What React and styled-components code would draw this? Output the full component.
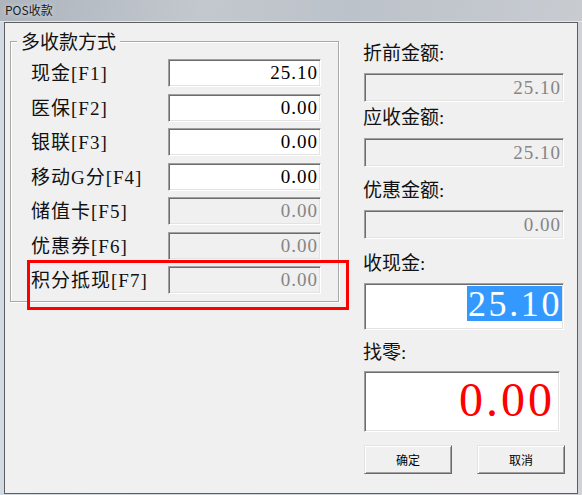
import React from "react";
import styled, { createGlobalStyle } from "styled-components";

const GlobalStyle = createGlobalStyle`
  html, body { margin: 0; padding: 0; }
  body { width: 582px; height: 495px; overflow: hidden; background: #cfd6df; }
  * { box-sizing: border-box; }
`;

const CJK = `"Noto Sans CJK SC", sans-serif`;
const SERIF = `"Liberation Serif", "Noto Sans CJK SC", serif`;

const Window = styled.div`
  width: 582px;
  height: 495px;
  display: flex;
  flex-direction: column;
  background: linear-gradient(90deg, #d2dae4 0%, #cdd3db 50%, #cfd2d7 100%);
`;

const TitleBar = styled.div`
  height: 22px;
  flex: none;
  padding-left: 5px;
  font-family: ${CJK};
  font-size: 12px;
  line-height: 20px;
  color: #1b1b1b;
  text-shadow: 0 0 5px rgba(255, 255, 255, 0.7);
  background: linear-gradient(100deg, #adb4bc 0%, #c3c8ce 35%, #bcc2c9 60%, #c8ccd1 100%);
  border-bottom: 1px solid #e4e7ea;
`;

const Client = styled.div`
  position: relative;
  flex: 1;
  margin: 0 4px 1px 4px;
  border: 1px solid #5e5e5e;
  background: #f0f0f0;
  display: flex;
  align-items: flex-start;
`;

const GroupBox = styled.fieldset`
  margin: 8px 0 0 5px;
  width: 329px;
  padding: 8px 17px 7px 6px;
  border: 1px solid #a9a9a9;
  box-shadow: 1px 1px 0 #ffffff, inset 1px 1px 0 #ffffff;
  min-inline-size: 0;
`;

const GroupTitle = styled.legend`
  padding: 0 4px;
  height: 20px;
  font-family: ${CJK};
  font-size: 19px;
  line-height: 20px;
  color: #111;
  background: #f0f0f0;
`;

const Rows = styled.div`
  display: flex;
  flex-direction: column;
  gap: 6.5px;
  padding-left: 14px;
`;

const Row = styled.div`
  display: flex;
  align-items: center;
  height: 28px;
`;

const RowLabel = styled.div`
  width: 137px;
  font-family: ${SERIF};
  font-size: 19px;
  letter-spacing: 1px;
  line-height: 28px;
  color: #111;
  white-space: nowrap;
  padding-top: 2px;
`;

const Box = styled.div`
  width: ${(p) => p.$w}px;
  height: ${(p) => p.$h}px;
  margin-top: ${(p) => p.$mt || 0}px;
  flex: none;
  border-style: solid;
  border-width: 1px;
  border-color: #a0a0a0 #ffffff #ffffff #a0a0a0;
  box-shadow: inset 1px 1px 0 #6d6d6d, inset -1px -1px 0 #e3e3e3;
  background: ${(p) => (p.$disabled ? "#f0f0f0" : "#ffffff")};
  display: flex;
  justify-content: flex-end;
  align-items: ${(p) => p.$align || "center"};
  padding: 0 2px 1px 2px;
  overflow: hidden;
`;

const Value = styled.span`
  font-family: ${SERIF};
  font-size: 19px;
  letter-spacing: 1px;
  line-height: 1;
  color: ${(p) => (p.$disabled ? "#868686" : "#000")};
`;

const SelectedValue = styled.span`
  display: inline-block;
  height: 35px;
  line-height: 37px;
  font-family: ${SERIF};
  font-size: 36px;
  letter-spacing: 2.6px;
  color: #ffffff;
  background: #3399ff;
  margin-top: 2px;
  margin-right: -1px;
  padding-left: 1px;
`;

const ChangeValue = styled.span`
  font-family: ${SERIF};
  font-size: 48px;
  letter-spacing: 3px;
  line-height: 1;
  color: #ff0000;
  padding-right: 2px;
  padding-bottom: 3px;
`;

const RightColumn = styled.div`
  margin: 19px 0 0 25px;
  width: 201px;
  display: flex;
  flex-direction: column;
`;

const FieldLabel = styled.div`
  margin-top: ${(p) => p.$mt || 0}px;
  margin-left: -1px;
  height: 24px;
  font-family: ${SERIF};
  font-size: 19px;
  line-height: 24px;
  color: #111;
  white-space: nowrap;
`;

const ButtonRow = styled.div`
  margin-top: 13px;
  display: flex;
  justify-content: space-between;
`;

const Button = styled.button`
  width: 88px;
  height: 29px;
  padding: 0;
  font-family: ${CJK};
  font-size: 12px;
  color: #000;
  background: #f0f0f0;
  border-style: solid;
  border-width: 1px;
  border-color: #e3e3e3 #696969 #696969 #e3e3e3;
  box-shadow: inset 1px 1px 0 #ffffff, inset -1px -1px 0 #a0a0a0;
  cursor: default;
`;

const Highlight = styled.div`
  position: absolute;
  left: 22px;
  top: 237px;
  width: 322px;
  height: 50px;
  border: 3px solid #ff0000;
  pointer-events: none;
`;

const payments = [
  { label: "现金[F1]", value: "25.10", enabled: true },
  { label: "医保[F2]", value: "0.00", enabled: true },
  { label: "银联[F3]", value: "0.00", enabled: true },
  { label: "移动G分[F4]", value: "0.00", enabled: true },
  { label: "储值卡[F5]", value: "0.00", enabled: false },
  { label: "优惠券[F6]", value: "0.00", enabled: false },
  { label: "积分抵现[F7]", value: "0.00", enabled: false },
];

export default function App() {
  return (
    <>
      <GlobalStyle />
      <Window>
        <TitleBar>POS收款</TitleBar>
        <Client>
          <GroupBox>
            <GroupTitle>多收款方式</GroupTitle>
            <Rows>
              {payments.map((p) => (
                <Row key={p.label}>
                  <RowLabel>{p.label}</RowLabel>
                  <Box $w={153} $h={28} $disabled={!p.enabled}>
                    <Value $disabled={!p.enabled}>{p.value}</Value>
                  </Box>
                </Row>
              ))}
            </Rows>
          </GroupBox>

          <RightColumn>
            <FieldLabel>折前金额:</FieldLabel>
            <Box $w={200} $h={29} $mt={7} $disabled>
              <Value $disabled>25.10</Value>
            </Box>
            <FieldLabel $mt={4}>应收金额:</FieldLabel>
            <Box $w={200} $h={29} $mt={8} $disabled>
              <Value $disabled>25.10</Value>
            </Box>
            <FieldLabel $mt={12}>优惠金额:</FieldLabel>
            <Box $w={200} $h={29} $mt={7} $disabled>
              <Value $disabled>0.00</Value>
            </Box>
            <FieldLabel $mt={13}>收现金:</FieldLabel>
            <Box $w={200} $h={47} $mt={7} $align="flex-start">
              <SelectedValue>25.10</SelectedValue>
            </Box>
            <FieldLabel $mt={11}>找零:</FieldLabel>
            <Box $w={196} $h={61} $mt={6}>
              <ChangeValue>0.00</ChangeValue>
            </Box>
            <ButtonRow>
              <Button>确定</Button>
              <Button>取消</Button>
            </ButtonRow>
          </RightColumn>

          <Highlight />
        </Client>
      </Window>
    </>
  );
}
